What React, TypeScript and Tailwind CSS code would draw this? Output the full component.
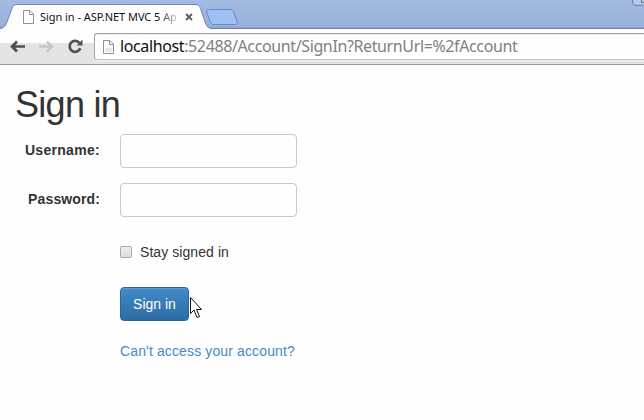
import React from "react";

function PageIcon({ shaded = false }: { shaded?: boolean }) {
  return (
    <svg width="12" height="14" viewBox="0 0 12 14" className="shrink-0" fill="none">
      <path d="M.5 .5H7L10.500 4V13.500H.5V.5Z" fill="#fff" stroke="#929292" />
      {shaded && <path d="M2 8H9V12H2Z" fill="#e7e7e7" />}
      <path d="M6.500 .5V4.500H10.500" stroke="#929292" />
    </svg>
  );
}

function TabStrip() {
  return (
    <header className="relative h-[29px] border-b border-[#6f81ad] bg-linear-to-b from-[#a3bbe3] to-[#98afda]">
      <svg width="644" height="29" viewBox="0 0 644 29" className="absolute top-0 left-0" fill="none">
        <path d="M0 27.5H209" stroke="#8196c1" />
        <path d="M209 27.5H644" stroke="#8ba1ce" />
        <path
          d="M0 29V28.5C4 28 5.500 26 7 22L12 8.500C13 5.500 14.500 4.500 17 4.500H195C198 4.500 199.500 5.500 200.500 8.500L205 22C206.500 26 207.500 28 211 28.500V29Z"
          fill="#fefefe"
        />
        <path
          d="M0 28.500C4 28 5.500 26 7 22L12 8.500C13 5.500 14.500 4.500 17 4.500H195C198 4.500 199.500 5.500 200.500 8.500L205 22C206.500 26 207.500 28 211 28.500"
          stroke="#7187b6"
        />
        <path
          d="M208.500 9.500H230C232 9.500 233 10 233.700 12L237.300 22C237.800 23.800 237.500 24.500 235.500 24.500H214C212 24.500 211 24 210.300 22L206.700 12C206.200 10.300 206.700 9.500 208.500 9.500Z"
          fill="#9dc1f5"
          stroke="#7189ba"
        />
        <path d="M632.500 0V2C632.500 4 633.500 5.500 636 5.500H644" stroke="#7187b6" />
        <path d="M634 0V2C634 3.500 635 4 636.500 4H644V0Z" fill="#b8caeb" />
        <path d="M641.500 0V2.500H644" stroke="#71717a" />
      </svg>
      <div className="relative flex h-[29px] items-start pt-[10px] pl-[23px]">
        <PageIcon />
        <span className="ml-[5px] mt-[-1px] w-[138px] overflow-hidden whitespace-nowrap font-['Noto_Sans',sans-serif] text-[11px] leading-[15px] tracking-[-0.05px] text-[#111]">
          Sign in - ASP.NET MVC 5 <span className="bg-linear-to-r from-[#444] to-[#ccc] bg-clip-text text-transparent">Ap</span>
        </span>
        <svg width="8" height="8" viewBox="0 0 8 8" className="ml-[7px] mt-[3px]">
          <path d="M1 1L7 7M7 1L1 7" stroke="#5b5b5b" strokeWidth="1.8" />
        </svg>
      </div>
    </header>
  );
}

function Toolbar() {
  return (
    <div className="flex h-9 items-start border-b border-[#999] bg-linear-to-b from-[#fefefe] from-40% to-[#e4e4e4] to-40%">
      <svg width="94" height="35" viewBox="0 0 94 35" className="shrink-0" fill="none">
        <path d="M11.500 17.500H25M17 12.500L12 17.500L17 22.500" stroke="#4f4f4f" strokeWidth="2.700" />
        <path d="M39 17.500H52.500M47 12.500L52 17.500L47 22.500" stroke="#c5c5c5" strokeWidth="2.400" />
        <path d="M79.500 14A5.500 5.500 0 1 0 80.300 19.300" stroke="#505050" strokeWidth="2.700" />
        <path d="M82.500 10.500V16.500H76.500Z" fill="#505050" />
      </svg>
      <div className="mt-1 flex h-[27px] flex-1 items-center rounded-l-[3px] border border-r-0 border-[#a5a5a5] border-b-[#bdbdbd] bg-[#fefefe] pl-[8px] shadow-[inset_0_1px_0_#e6e6e6,0_1px_0_#f4f4f4]">
        <PageIcon shaded />
        <span className="mt-[-1px] ml-[5px] whitespace-nowrap font-['Noto_Sans',sans-serif] text-[16px] leading-6 tracking-[-0.38px] text-[#808080]">
          <span className="text-[#111]">localhost</span>:52488/Account/SignIn?ReturnUrl=%2fAccount
        </span>
      </div>
    </div>
  );
}

function Field({ label, type, tracking }: { label: string; type: string; tracking: string }) {
  return (
    <label className="flex h-[34px] items-center">
      <span className={`mt-[-2px] w-[85px] text-right font-bold ${tracking}`}>{label}</span>
      <input
        type={type}
        className="ml-5 h-[34px] w-[177px] rounded-[4px] border border-[#c8c8c8] bg-[#fefefe] px-3 outline-none"
      />
    </label>
  );
}

export default function App() {
  return (
    <div className="relative h-[420px] w-[644px] overflow-hidden bg-[#fefefe] font-['Liberation_Sans',Arial,sans-serif] text-[14px] leading-5 text-[#333]">
      <TabStrip />
      <Toolbar />
      <main className="px-[15px] pt-5">
        <h1 className="h-10 text-[36px] leading-10 tracking-[-0.7px]">Sign in</h1>
        <form className="mt-[9px] flex flex-col gap-[15px]" onSubmit={(e) => e.preventDefault()}>
          <Field label="Username:" type="text" tracking="tracking-[0.3px]" />
          <Field label="Password:" type="password" tracking="tracking-[0.12px]" />
          <div className="ml-[105px] flex flex-col items-start pt-[10px]">
            <label className="flex h-5 items-center gap-2">
              <input
                type="checkbox"
                className="m-0 h-3 w-3 appearance-none rounded-[2px] border border-[#aaa] bg-linear-to-b from-[#eee] to-[#dcdcdc]"
              />
              <span className="tracking-[0.07px]">Stay signed in</span>
            </label>
            <button className="mt-[25px] h-[34px] w-[69px] rounded-[4px] border border-[#2b669a] bg-linear-to-b from-[#428bca] to-[#2d6ca2] text-white shadow-[inset_0_1px_0_rgba(255,255,255,0.15)]">
              Sign in
            </button>
            <a href="#" className="mt-5 tracking-[0.13px] text-[#428bca]">
              Can't access your account?
            </a>
          </div>
        </form>
      </main>
      <svg width="14" height="22" viewBox="0 0 14 22" className="absolute top-[296px] left-[189px]">
        <path d="M1.500 1.500V17.500L5 14L8 21.500L10.500 20.500L7.500 13.500H12.500Z" fill="#fff" stroke="#111" />
      </svg>
    </div>
  );
}
